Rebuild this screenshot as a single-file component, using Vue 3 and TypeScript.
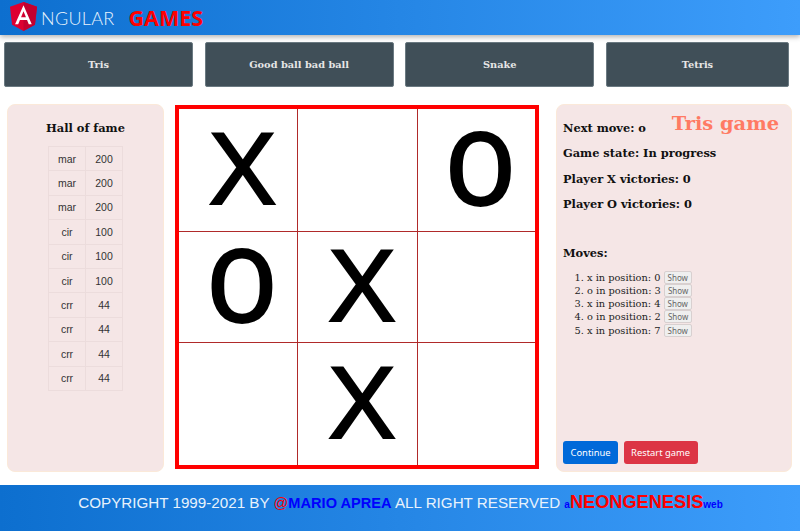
<script setup lang="ts">
const games: string[] = ['Tris', 'Good ball bad ball', 'Snake', 'Tetris']
const fame: [string, number][] = [
  ['mar', 200], ['mar', 200], ['mar', 200],
  ['cir', 100], ['cir', 100], ['cir', 100],
  ['crr', 44], ['crr', 44], ['crr', 44], ['crr', 44],
]
const cells: string[] = ['X', '', 'O', 'O', 'X', '', '', 'X', '']
const moves: string[] = ['x in position: 0', 'o in position: 3', 'x in position: 4', 'o in position: 2', 'x in position: 7']
const stats: string[] = ['Game state: In progress', 'Player X victories: 0', 'Player O victories: 0']
</script>

<template>
  <div class="page">
    <header class="topbar">
      <svg class="logo" viewBox="31.9 30 186.2 200" width="27" height="29" preserveAspectRatio="none">
        <polygon fill="#dd0031" points="125,30 31.9,63.2 46.1,186.3 125,230 203.9,186.3 218.1,63.2" />
        <polygon fill="#c3002f" points="125,30 125,230 203.9,186.3 218.1,63.2" />
        <path fill="#fff" d="M125 52.1L66.8 182.6h21.7l11.7-29.2h49.4l11.7 29.2H182L125 52.1zm17 83.3h-34l17-40.9 17 40.9z" />
      </svg>
      <span class="brand">NGULAR</span>
      <span class="games">GAMES</span>
    </header>

    <nav class="gamenav">
      <button v-for="g in games" :key="g" class="gamebtn" type="button">{{ g }}</button>
    </nav>

    <main class="content">
      <aside class="panel fame">
        <h3 class="fame-title">Hall of fame</h3>
        <table class="fame-table">
          <tbody>
            <tr v-for="(r, i) in fame" :key="i">
              <td>{{ r[0] }}</td>
              <td>{{ r[1] }}</td>
            </tr>
          </tbody>
        </table>
      </aside>

      <section class="board">
        <div v-for="(c, i) in cells" :key="i" class="cell" :class="{ 'cell-x': c === 'X' }">{{ c }}</div>
      </section>

      <aside class="panel info">
        <div class="info-title">Tris game</div>
        <p class="stat">Next move: o</p>
        <p v-for="s in stats" :key="s" class="stat">{{ s }}</p>
        <p class="stat moves-title">Moves:</p>
        <ol class="moves">
          <li v-for="m in moves" :key="m">{{ m }} <button class="show" type="button">Show</button></li>
        </ol>
        <div class="actions">
          <button class="act blue" type="button">Continue</button>
          <button class="act red" type="button">Restart game</button>
        </div>
      </aside>
    </main>

    <footer class="foot">
      <span class="foot-line">COPYRIGHT 1999-2021 BY <span class="at">@</span><b class="blue-t">MARIO APREA</b> ALL RIGHT RESERVED <b class="blue-s">a</b><b class="neon">NEONGENESIS</b><b class="blue-s">web</b></span>
    </footer>
  </div>
</template>

<style>
html, body { margin: 0; padding: 0; background: #fff; }
</style>

<style scoped>
.page {
  width: 800px;
  height: 531px;
  display: flex;
  flex-direction: column;
  overflow: hidden;
  background: #fff;
}
.topbar {
  height: 35px;
  flex: none;
  display: flex;
  align-items: center;
  padding-left: 10px;
  background: linear-gradient(90deg, #0d6fcf, #3d9dfb);
  box-shadow: 0 2px 5px rgba(0, 0, 0, 0.3);
  position: relative;
}
.logo { flex: none; margin-top: -2px; }
.brand {
  font-family: Lato, sans-serif;
  font-weight: 300;
  font-size: 18px;
  color: #e8f2fc;
  margin-left: 4px;
  letter-spacing: 0.3px;
}
.games {
  font-family: "Noto Sans", sans-serif;
  font-weight: 700;
  font-size: 21.5px;
  color: #ff0000;
  margin-left: 14px;
}
.gamenav {
  flex: none;
  display: grid;
  grid-template-columns: 189px 189px 189px 183px;
  column-gap: 11.67px;
  padding: 7px 0 0 4px;
}
.gamebtn {
  height: 45px;
  background: #404f58;
  border: 1px solid #6b7a82;
  border-radius: 2px;
  color: #e6e6e6;
  font-family: "DejaVu Serif", serif;
  font-weight: 700;
  font-size: 9.8px;
  padding: 0;
}
.content {
  flex: 1;
  display: flex;
  align-items: flex-start;
  padding: 17px 8px 0 7px;
}
.panel {
  background: #f5e6e6;
  border: 1px solid #fbe9d9;
  border-radius: 8px;
  box-sizing: border-box;
  height: 368px;
}
.fame {
  width: 157px;
  flex: none;
  display: flex;
  flex-direction: column;
  align-items: center;
}
.fame-title {
  margin: 15px 0 0;
  font-family: "DejaVu Serif", serif;
  font-weight: 700;
  font-size: 11.4px;
  line-height: 16px;
  color: #111;
}
.fame-table {
  margin-top: 10px;
  border-collapse: collapse;
  font-family: "Liberation Sans", sans-serif;
  font-size: 10.5px;
  color: #333;
}
.fame-table td {
  border: 1px solid #ecdcdc;
  height: 23.4px;
  padding: 0;
  text-align: center;
  width: 36px;
}
.board {
  flex: none;
  width: 364px;
  height: 364px;
  box-sizing: border-box;
  margin: 1px 17px 0 11px;
  border: 4px solid #ff0000;
  background: #fff;
  display: grid;
  grid-template-columns: 119px 120px 1fr;
  grid-template-rows: 123px 111px 1fr;
}
.cell {
  display: flex;
  align-items: center;
  justify-content: center;
  padding-left: 8px;
  font-family: Roboto, sans-serif;
  font-weight: 500;
  font-size: 103px;
  line-height: 1;
  color: #000;
  border-right: 1px solid #b02a2a;
  border-bottom: 1px solid #b02a2a;
}
.cell-x {
  padding-left: 9px;
  padding-bottom: 2px;
  font-family: "Liberation Sans", sans-serif;
  font-size: 102px;
  font-weight: 400;
  -webkit-text-stroke: 2px #000;
}
.cell:nth-child(3n) { border-right: none; }
.cell:nth-child(n + 7) { border-bottom: none; }
.info {
  width: 236px;
  flex: none;
  padding: 15px 0 0 6px;
  position: relative;
}
.info-title {
  position: absolute;
  top: 7px;
  right: 12px;
  font-family: "DejaVu Serif", serif;
  font-weight: 700;
  font-size: 19.4px;
  color: #ff7a63;
}
.stat {
  margin: 0 0 9.3px;
  font-family: "DejaVu Serif", serif;
  font-weight: 700;
  font-size: 11.4px;
  line-height: 16px;
  color: #111;
}
.moves-title { margin-top: 33px; }
.moves {
  margin: 10px 0 0;
  padding-left: 24px;
  font-family: "DejaVu Serif", serif;
  font-size: 9.8px;
  color: #222;
}
.moves li {
  height: 13.2px;
  line-height: 13.2px;
}
.show {
  height: 13px;
  padding: 0 3px;
  font-family: "Noto Sans", sans-serif;
  font-size: 8px;
  line-height: 11px;
  color: #666;
  background: #efefef;
  border: 1px solid #d8d0d0;
  border-radius: 2px;
  vertical-align: top;
}
.actions {
  position: absolute;
  left: 6px;
  bottom: 7px;
  display: flex;
  gap: 5.5px;
}
.act {
  height: 23px;
  padding: 0 7.5px;
  border: none;
  border-radius: 3px;
  color: #fff;
  font-family: "Noto Sans", sans-serif;
  font-size: 9.4px;
}
.blue { background: #0069d9; }
.red { background: #dc3545; }
.foot {
  flex: none;
  height: 46px;
  box-sizing: border-box;
  padding-top: 7px;
  display: flex;
  justify-content: center;
  background: linear-gradient(90deg, #0d6fcf, #3d9dfb);
  font-family: "Liberation Sans", sans-serif;
  font-size: 15.2px;
  line-height: 20px;
  color: #e8f2fc;
  white-space: nowrap;
}
.foot-line { margin-left: 1px; }
.at { color: #ff0000; font-size: 14.6px; }
.blue-t { color: #0000ff; font-size: 14.6px; }
.blue-s { color: #0000ff; font-size: 10px; }
.neon { color: #ff0000; font-size: 18.2px; }
</style>
